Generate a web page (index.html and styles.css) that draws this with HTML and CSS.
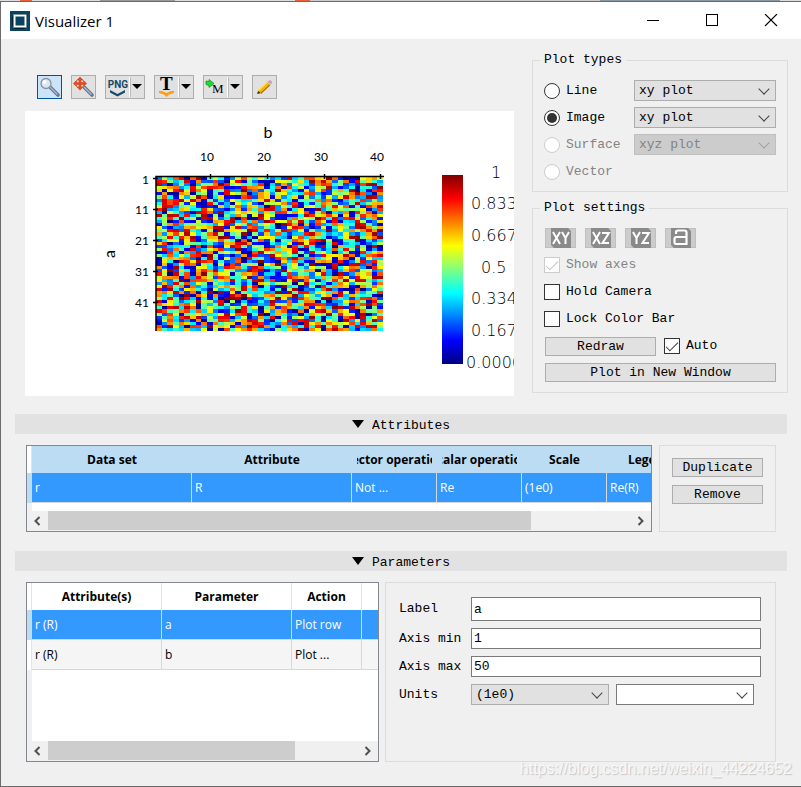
FILE: index.html
```html
<!DOCTYPE html>
<html lang="en">
<head>
<meta charset="utf-8">
<title>Visualizer 1</title>
<link rel="stylesheet" href="styles.css">
</head>
<body>
<div class="window">
  <header class="titlebar">
    <svg class="app-icon" width="20" height="20" viewBox="0 0 20 20" aria-hidden="true"><rect width="20" height="20" fill="#084462"/><path d="M2 14V6l3-3h12v12l-3 3H5z" fill="#05202e"/><rect x="4.500" y="4.500" width="11" height="11" fill="#084462" stroke="#fff" stroke-width="2"/></svg>
    <h1 class="title">Visualizer 1</h1>
    <div class="window-controls">
      <button type="button" aria-label="Minimize"><svg width="14" height="14"><path d="M1 6.500h12" stroke="#000"/></svg></button>
      <button type="button" aria-label="Maximize"><svg width="14" height="14"><rect x="1.500" y="0.500" width="11" height="11" fill="none" stroke="#000"/></svg></button>
      <button type="button" aria-label="Close"><svg width="14" height="14"><path d="M1 0l12 12M13 0L1 12" stroke="#000" stroke-width="1.100"/></svg></button>
    </div>
  </header>

  <main class="content">
    <div class="top">
      <section class="plot-column">
        <div class="toolbar">
          <button type="button" class="tool active" aria-label="Zoom"><svg width="23" height="22"><path d="M12 11l8 8" stroke="#64748f" stroke-width="3.600" stroke-linecap="round"/><path d="M12 11l7.500 7.500" stroke="#a9b5cb" stroke-width="1.400"/><circle cx="8" cy="7.500" r="5" fill="#dce6f2" stroke="#8a93a5" stroke-width="1.300"/><circle cx="6.500" cy="6" r="2" fill="#fff"/></svg></button>
          <button type="button" class="tool" aria-label="Pan"><svg width="23" height="22"><path d="M12 11l8 8" stroke="#64748f" stroke-width="3.600" stroke-linecap="round"/><path d="M12 11l7.500 7.500" stroke="#a9b5cb" stroke-width="1.400"/><circle cx="8" cy="7.500" r="4.500" fill="#dadde4" stroke="#9b9faa"/><path d="M8 1l3 3H9v2.500h2.500v-2l3.200 3-3.200 3v-2H9V11h2l-3 3.200L5 11h2V8.500H4.500v2l-3.200-3 3.200-3v2H7V4H5z" fill="#e34a1c" stroke="#e34a1c" stroke-width=".600"/></svg></button>
          <button type="button" class="tool split" aria-label="Export PNG"><svg width="38" height="22"><text x="12" y="12" class="png-text">PNG</text><path d="M4 14l7.500 4 7.500-4v2.500l-7.500 4-7.500-4z" fill="#174a66"/><path d="M23.500 1v20" stroke="#fff"/><path d="M24.500 1v20" stroke="#bbb"/><path d="M26 8h10l-5 5z"/></svg></button>
          <button type="button" class="tool split" aria-label="Export text"><svg width="38" height="22"><text x="5" y="14" class="t-text">T</text><path d="M4 15h3l4.500 2 4.500-2h3v2l-5 1.500-2.500 2.500-2.500-2.500-5-1.500z" fill="#ff9c14"/><path d="M23.500 1v20" stroke="#fff"/><path d="M24.500 1v20" stroke="#bbb"/><path d="M26 8h10l-5 5z"/></svg></button>
          <button type="button" class="tool split" aria-label="Export to MATLAB"><svg width="38" height="22"><path d="M2 5l3 .500V3.500l5 4-5 4V9.500L2 8.500z" fill="#18e02c" stroke="#0b8a1a" stroke-width=".700"/><text x="8" y="17" class="m-text">M</text><path d="M23.500 1v20" stroke="#fff"/><path d="M24.500 1v20" stroke="#bbb"/><path d="M26 8h10l-5 5z"/></svg></button>
          <button type="button" class="tool" aria-label="Edit"><svg width="23" height="22"><path d="M4 18l1.500-4 3 3z" fill="#3b3024"/><path d="M5 14.500l9-8.500 3 3-9 8.500z" fill="#f5b400"/><path d="M7.500 17l9-8.500.8.800-9 8.500z" fill="#9b6b12"/><path d="M5 14.500l9-8.500.7.700-9 8.500z" fill="#ffe16b"/><path d="M14 6l1.200-1 3 3-1.200 1z" fill="#b6bcc2"/><path d="M15.200 5q1.800-1.500 3.300 0t-.3 3z" fill="#e08fb5"/></svg></button>
        </div>
        <div class="plot">
          <svg width="100%" height="285" role="img" aria-label="Image plot of a against b">
            <defs>
              <linearGradient id="jet" x1="0" y1="0" x2="0" y2="1">
                <stop offset="0" stop-color="#800000"/><stop offset=".125" stop-color="#f00"/><stop offset=".375" stop-color="#ff0"/><stop offset=".625" stop-color="#0ff"/><stop offset=".875" stop-color="#00f"/><stop offset="1" stop-color="#000080"/>
              </linearGradient>
            </defs>
            <g id="cells" transform="translate(131 66)" shape-rendering="crispEdges"></g>
            <path d="M131 220V65.500H359" fill="none" stroke="#000" stroke-width="1.500"/>
            <path d="M185.500 63v5M242.500 63v5M299.500 63v5M355.500 63v5M128 67.500h5M128 98.500h5M128 129.500h5M128 160.500h5M128 191.500h5" stroke="#000" stroke-width="1.500"/>
            <g class="axis-title"><text x="243" y="27">b</text><text transform="translate(90 143) rotate(-90)">a</text></g>
            <g class="ticks top-ticks"><text x="182" y="50">10</text><text x="239" y="50">20</text><text x="296" y="50">30</text><text x="352" y="50">40</text></g>
            <g class="ticks side-ticks"><text x="124" y="73">1</text><text x="124" y="103">11</text><text x="124" y="134">21</text><text x="124" y="165">31</text><text x="124" y="196">41</text></g>
            <rect x="417" y="64" width="21" height="189" fill="url(#jet)"/>
            <g class="scale"><text x="466" y="67">1</text><text x="446" y="98">0.833</text><text x="446" y="130">0.667</text><text x="456" y="162">0.5</text><text x="446" y="193">0.334</text><text x="446" y="225">0.167</text><text x="441" y="257">0.0006</text></g>
          </svg>
        </div>
      </section>

      <aside class="settings">
        <fieldset>
          <legend>Plot types</legend>
          <div class="type-grid">
            <label><input type="radio" name="type">Line</label>
            <span class="select"><select aria-label="Line plot"><option>xy plot</option></select></span>
            <label><input type="radio" name="type" checked>Image</label>
            <span class="select"><select aria-label="Image plot"><option>xy plot</option></select></span>
            <label class="off"><input type="radio" name="type" disabled>Surface</label>
            <span class="select"><select aria-label="Surface plot" disabled><option>xyz plot</option></select></span>
            <label class="off"><input type="radio" name="type" disabled>Vector</label>
          </div>
        </fieldset>
        <fieldset>
          <legend>Plot settings</legend>
          <div class="setting-rows">
            <div class="views">
              <button type="button" disabled aria-label="XY view"><svg width="20" height="20"><path d="M0 0h17l3 3v17H3l-3-3z" fill="#8a8a8a"/><path d="M2 4l7 12M9 4L2 16M11 4l3.500 6L18 4M14.500 10v6" class="glyph"/></svg></button>
              <button type="button" disabled aria-label="XZ view"><svg width="20" height="20"><path d="M0 0h17l3 3v17H3l-3-3z" fill="#8a8a8a"/><path d="M2 4l7 12M9 4L2 16M11 5h7l-6.500 10H18" class="glyph"/></svg></button>
              <button type="button" disabled aria-label="YZ view"><svg width="20" height="20"><path d="M0 0h17l3 3v17H3l-3-3z" fill="#8a8a8a"/><path d="M2 4l3.500 6L9 4M5.500 10v6M11 5h7l-6.500 10H18" class="glyph"/></svg></button>
              <button type="button" disabled aria-label="Reset camera"><svg width="20" height="20"><path d="M0 0h17l3 3v17H3l-3-3z" fill="#8a8a8a"/><path d="M5 6V4q0-1.500 2-1.500h6.500q2 0 2 2V16H5q-1.500 0-1.500-2v-3q0-2 2-2h10" fill="none" stroke="#fff" stroke-width="2.200"/></svg></button>
            </div>
            <label class="off"><input type="checkbox" checked disabled>Show axes</label>
            <label><input type="checkbox">Hold Camera</label>
            <label><input type="checkbox">Lock Color Bar</label>
            <div class="redraw"><button type="button" class="btn">Redraw</button><label><input type="checkbox" checked>Auto</label></div>
            <button type="button" class="btn wide">Plot in New Window</button>
          </div>
        </fieldset>
      </aside>
    </div>

    <h2 class="bar"><svg width="12" height="8"><path d="M0 0h12L6 8z"/></svg><span>Attributes</span></h2>
    <div class="attributes">
      <div class="grid-box">
        <div class="viewport">
          <table class="data attr-table">
            <colgroup><col class="w-head"><col class="w-160"><col class="w-160"><col class="w-85"><col class="w-85"><col class="w-85"><col class="w-85"></colgroup>
            <thead><tr><td></td><th><span>Data set</span></th><th><span>Attribute</span></th><th><span>Vector operation</span></th><th><span>Scalar operation</span></th><th><span>Scale</span></th><th><span>Legend</span></th></tr></thead>
            <tbody><tr class="selected"><td></td><td>r</td><td>R</td><td>Not ...</td><td>Re</td><td>(1e0)</td><td>Re(R)</td></tr></tbody>
          </table>
        </div>
        <div class="scrollbar"><button type="button" aria-label="Scroll left"><svg width="10" height="10"><path d="M6.500 1l-4 4 4 4"/></svg></button><div class="track"><div class="thumb" style="width:83%"></div></div><button type="button" aria-label="Scroll right"><svg width="10" height="10"><path d="M2.500 1l4 4-4 4"/></svg></button></div>
      </div>
      <div class="side-box"><button type="button" class="btn">Duplicate</button><button type="button" class="btn">Remove</button></div>
    </div>

    <h2 class="bar"><svg width="12" height="8"><path d="M0 0h12L6 8z"/></svg><span>Parameters</span></h2>
    <div class="parameters">
      <div class="grid-box">
        <div class="viewport">
          <table class="data param-table">
            <colgroup><col class="w-head"><col class="w-130"><col class="w-130"><col class="w-70"><col class="w-70"></colgroup>
            <thead><tr><td></td><th><span>Attribute(s)</span></th><th><span>Parameter</span></th><th><span>Action</span></th><th></th></tr></thead>
            <tbody>
              <tr class="selected"><td></td><td>r (R)</td><td>a</td><td>Plot row</td><td></td></tr>
              <tr class="alt"><td></td><td>r (R)</td><td>b</td><td>Plot ...</td><td></td></tr>
            </tbody>
          </table>
        </div>
        <div class="scrollbar"><button type="button" aria-label="Scroll left"><svg width="10" height="10"><path d="M6.500 1l-4 4 4 4"/></svg></button><div class="track"><div class="thumb" style="width:80%"></div></div><button type="button" aria-label="Scroll right"><svg width="10" height="10"><path d="M2.500 1l4 4-4 4"/></svg></button></div>
      </div>
      <form class="form-box">
        <label for="p-label">Label</label><input id="p-label" class="tall" type="text" value="a">
        <label for="p-min">Axis min</label><input id="p-min" type="text" value="1">
        <label for="p-max">Axis max</label><input id="p-max" type="text" value="50">
        <label for="p-units">Units</label>
        <div class="units"><span class="select"><select id="p-units"><option>(1e0)</option></select></span><span class="select plain"><select aria-label="Unit name"><option></option></select></span></div>
      </form>
    </div>
  </main>
  <div class="watermark">https://blog.csdn.net/weixin_44224652</div>
</div>
<script src="plot.js"></script>
</body>
</html>
```
FILE: styles.css
```css
* { box-sizing: border-box; }

body {
  margin: 0;
  font: 13px/16px "Liberation Mono", monospace;
  color: #000;
  background: linear-gradient(90deg, #ddd 0 20px, #e8613a 20px 32px, #ddd 32px 100px, #999 100px 175px, #ddd 175px 295px, #e8613a 295px 310px, #ccc 310px 600px, #8899a5 600px 780px, #ddd 780px);
}

button, input, select { font: inherit; color: inherit; margin: 0; }
svg { display: block; }

.window {
  position: relative;
  min-height: calc(100vh - 1px);
  margin-top: 1px;
  border: solid #6b6b6b;
  border-width: 1px 0 1px 1px;
  background: #f0f0f0;
}

.titlebar { display: flex; align-items: center; height: 37px; padding-left: 9px; background: #fff; }
.title { margin: 0 0 0 5px; font: 15px/20px "Open Sans", "Noto Sans", sans-serif; }
.window-controls { display: flex; margin-left: auto; padding-right: 1px; }
.window-controls button { display: grid; place-items: center; width: 59px; height: 37px; padding: 0; border: 0; background: none; }

.content { padding: 13px 14px 24px; }

.top { display: grid; grid-template-columns: minmax(0, 1fr) 256px; gap: 18px; margin-right: -1px; padding-left: 10px; }
.toolbar { display: flex; gap: 9px; padding: 23px 12px 12px; }
.tool { width: 25px; height: 24px; padding: 0; border: 1px solid #adadad; background: #e1e1e1; overflow: hidden; }
.tool.split { width: 40px; }
.tool.active { border-color: #00549a; background: #cce4f7; }
.png-text { font: bold 10px Roboto, sans-serif; fill: #174a66; text-anchor: middle; }
.t-text { font: bold 19px "Liberation Serif", serif; }
.m-text { font: 13px "Liberation Serif", serif; }

.plot { height: 285px; overflow: hidden; background: #fff; }
.axis-title { font: 16px Lato, sans-serif; text-anchor: middle; }
.ticks { font: 12px Lato, sans-serif; }
.top-ticks { text-anchor: middle; }
.side-ticks { text-anchor: end; }
.scale { font: 200 16px "DejaVu Sans", "DejaVu Sans Light", sans-serif; }

.settings { display: grid; gap: 8px; align-content: start; }
fieldset { min-width: 0; margin: 0; padding: 12px 11px 9px; border: 1px solid #dcdcdc; }
legend { margin-left: -4px; padding: 0 4px; line-height: 16px; }
label { display: flex; align-items: center; gap: 6px; white-space: nowrap; }
.off { color: #838383; }

.type-grid { display: grid; grid-template-columns: 90px minmax(0, 1fr); grid-auto-rows: 21px; row-gap: 6px; }

input[type="radio"], input[type="checkbox"] {
  appearance: none;
  display: grid;
  place-items: center;
  flex: none;
  width: 16px;
  height: 16px;
  border: 1px solid #333;
  background: #fff;
}
input[type="radio"] { border-radius: 50%; }
input[type="radio"]:checked::after { content: ""; width: 10px; height: 10px; border-radius: 50%; background: #333; }
input[type="checkbox"]:checked::after { content: ""; width: 11px; height: 5px; margin-bottom: 3px; border: solid #333; border-width: 0 0 1px 1px; transform: rotate(-45deg); }
input[type="radio"]:disabled, input[type="checkbox"]:disabled { border-color: #ccc; }
input[type="checkbox"]:disabled::after { border-color: #bfbfbf; }

.select { position: relative; display: block; min-width: 0; }
.select::after { content: ""; position: absolute; right: 8px; top: 5px; width: 7px; height: 7px; border: solid #444; border-width: 0 1px 1px 0; transform: rotate(45deg); pointer-events: none; }
.select select { appearance: none; display: block; width: 100%; height: 21px; padding: 0 4px; border: 1px solid #adadad; border-radius: 0; background: #e1e1e1; }
.select select:disabled { border-color: #bfbfbf; background: #ccc; color: #838383; opacity: 1; }
.select:has(:disabled)::after { border-color: #a0a0a0; }
.select.plain select { border-color: #7a7a7a; background: #fff; }

.setting-rows { display: grid; grid-auto-rows: 20px; row-gap: 7px; }
.views { display: flex; gap: 9px; padding-left: 1px; }
.views button { display: grid; justify-content: center; align-content: center; width: 31px; height: 20px; padding: 0; border: 1px solid #bfbfbf; background: #ccc; }
.glyph { fill: none; stroke: #fff; stroke-width: 2; }
.redraw { display: flex; align-items: center; gap: 8px; padding-left: 1px; }
.redraw .btn { width: 111px; }
.btn { height: 19px; padding: 0; border: 1px solid #adadad; background: #e1e1e1; line-height: 17px; }
.wide { margin-left: 1px; }

.bar { display: flex; align-items: center; justify-content: center; gap: 8px; height: 20px; margin: 18px 0 11px; background: #e2e2e2; font: inherit; }
.bar span { height: 10px; overflow: hidden; line-height: 13px; }

.attributes { display: grid; grid-template-columns: minmax(0, 1fr) 117px; gap: 7px; padding: 0 11px; }
.parameters { display: grid; grid-template-columns: minmax(0, 353fr) minmax(0, 391fr); gap: 6px; min-height: 180px; padding: 0 11px; }
.grid-box { display: flex; flex-direction: column; border: 1px solid #828790; background: #fff; font: 12px/16px "Open Sans", "Noto Sans", sans-serif; }
.attributes + .bar { margin-top: 19px; }

.viewport { flex: 1; overflow: hidden; background: linear-gradient(90deg, #f0f0f0 5px, #fff 5px); }
.attributes .viewport { padding-bottom: 8px; }
.data { table-layout: fixed; border-collapse: separate; border-spacing: 0; }
.attr-table { width: 665px; }
.param-table { width: 405px; }
.w-head { width: 5px; }
.w-160 { width: 160px; }
.w-130 { width: 130px; }
.w-85 { width: 85px; }
.w-70 { width: 70px; }
.data th, .data td { padding: 0 3px; white-space: nowrap; text-align: left; }
.data th { height: 27px; padding: 0 5px; border-right: 1px solid #e5e5e5; background: #fff; }
.data th span { display: flex; justify-content: center; overflow: hidden; }
.attr-table th { border-right: 0; background: #bcdcf4; }
.data td { height: 30px; border: solid #d8d8d8; border-width: 0 1px 1px 0; }
.data tr td:first-child { padding: 0; border-width: 0 1px 0 0; border-color: #e5e5e5; background: #fff; }
.data thead td { height: 27px; }
.data .selected td { background: #3399ff; color: #fff; }
.data .selected td:first-child { border-color: #bcdcf4; background: #bcdcf4; }
.data .alt td { background: #f5f5f5; }

.scrollbar { display: flex; height: 20px; background: #f0f0f0; }
.scrollbar button { display: grid; place-items: center; width: 21px; height: 19px; padding: 0; border: 0; background: none; }
.scrollbar path { fill: none; stroke: #505050; stroke-width: 2; }
.track { flex: 1; }
.thumb { height: 19px; background: #cdcdcd; }

.side-box { display: flex; flex-direction: column; gap: 8px; padding: 12px; border: 1px solid #dcdcdc; }
.form-box { display: grid; grid-template-columns: 65px minmax(0, 1fr); align-content: start; align-items: center; gap: 7px; padding: 14px 14px 14px 13px; border: 1px solid #dcdcdc; }
.form-box input { width: 100%; height: 21px; padding: 0 2px; border: 1px solid #7a7a7a; background: #fff; }
.form-box .tall { height: 24px; }
.units { display: grid; grid-template-columns: 1fr 1fr; gap: 7px; padding-right: 7px; }

.watermark { position: absolute; right: 9px; bottom: 7px; font: 16px/20px "Liberation Sans", sans-serif; color: #f8f8f8; text-shadow: 1px 1px 1px #c4c4c4; pointer-events: none; }
```
FILE: plot.js
```js
const cells = document.getElementById("cells");
const columns = 40;
const rows = 50;
let seed = 20177;

function nextValue() {
  seed = (seed * 1103515245 + 12345) % 2147483648;
  return seed / 2147483648;
}

function jet(v) {
  const channel = (centre) => {
    const level = Math.min(1, Math.max(0, 1.5 - Math.abs(4 * v - centre)));
    return Math.round(level * 255);
  };
  return `rgb(${channel(3)},${channel(2)},${channel(1)})`;
}

for (let r = 0; r < rows; r++) {
  for (let c = 0; c < columns; c++) {
    const cell = document.createElementNS("http://www.w3.org/2000/svg", "rect");
    cell.setAttribute("x", c * 5.675);
    cell.setAttribute("y", r * 3.08);
    cell.setAttribute("width", 5.675);
    cell.setAttribute("height", 3.08);
    cell.setAttribute("fill", jet(nextValue()));
    cells.appendChild(cell);
  }
}
```
